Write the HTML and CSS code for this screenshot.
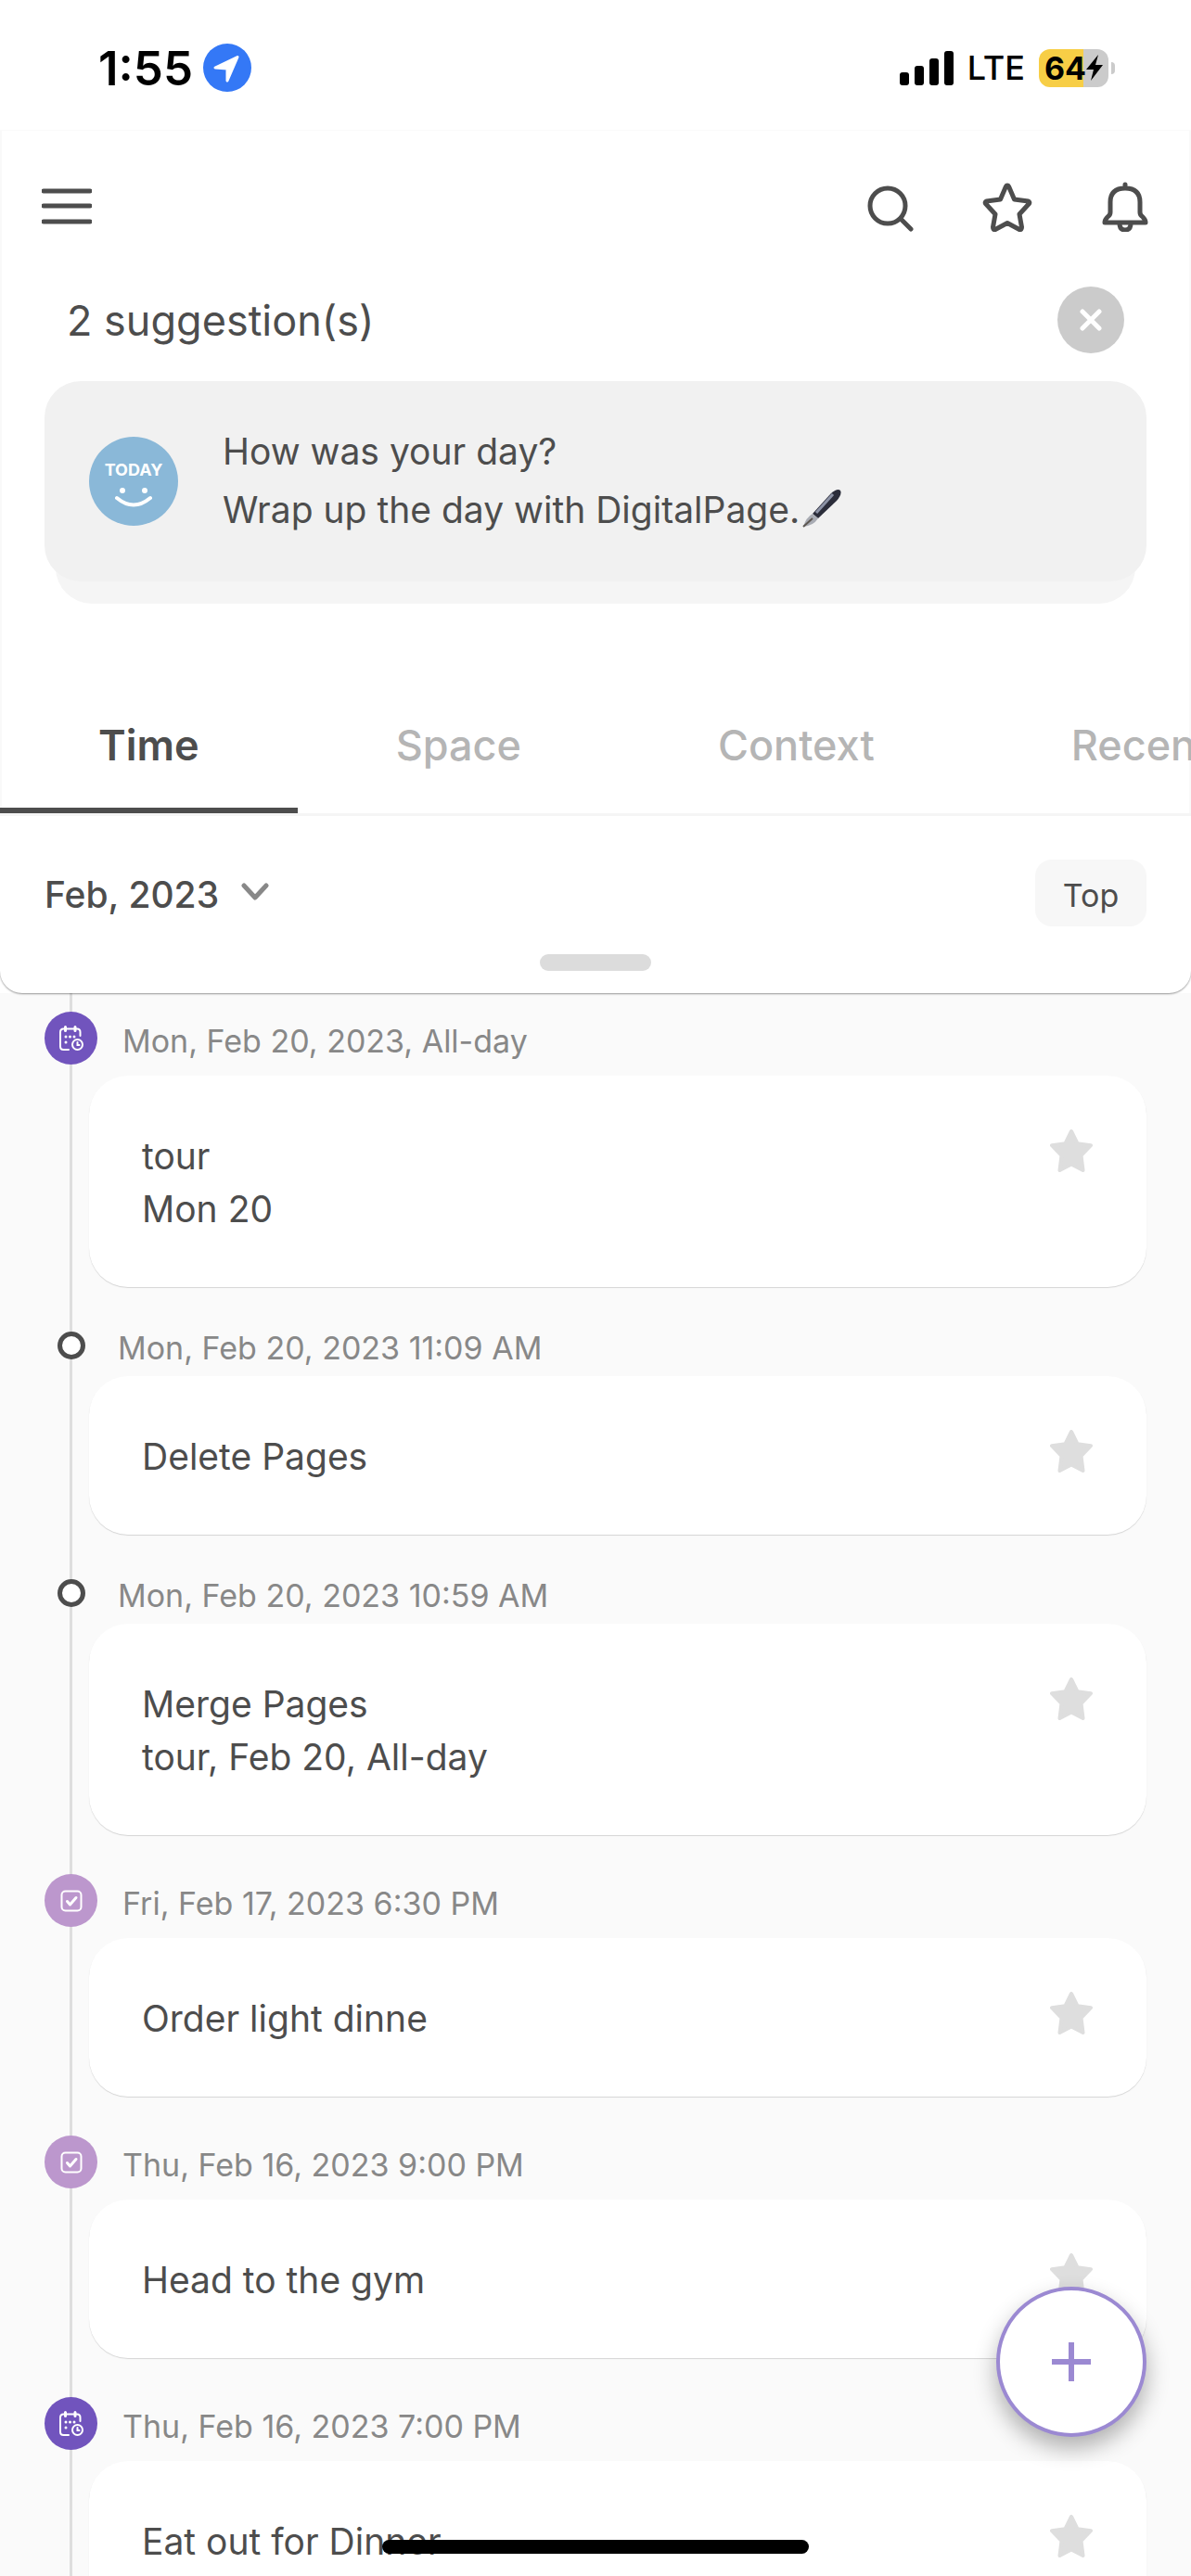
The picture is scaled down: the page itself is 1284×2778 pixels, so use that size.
FILE: index.html
```html
<!DOCTYPE html>
<html lang="en">

<head>
    <meta charset="utf-8">
    <meta name="viewport" content="width=device-width, initial-scale=1">
    <title>DigitalPage</title>
    <link rel="stylesheet" href="styles.css">
</head>

<body>
    <!-- shared icon shapes -->
    <svg class="sprite" aria-hidden="true">
        <symbol id="star" viewBox="0 0 46 46">
            <path d="M23 2 L29.500 15.200 L44 17.200 L33.500 28 L35.500 44 L23 37.500 L10.500 44 L12.500 28 L2 17.200 L16.500 15.200 Z" fill="currentColor" stroke="currentColor" stroke-width="4" stroke-linejoin="round" />
        </symbol>
        <symbol id="calendar" viewBox="0 0 30 30">
            <g fill="none" stroke="currentColor" stroke-width="2" stroke-linecap="round">
                <path d="M12 27 H6.500 Q3 27 3 23.500 V8 Q3 4.500 6.500 4.500 H21 Q24.500 4.500 24.500 8 V12" />
                <path d="M8.500 2.500 V6.500 M19 2.500 V6.500" stroke-width="3" />
                <circle cx="21.500" cy="21.500" r="5.500" />
                <path d="M21.500 19 V22 H23.500" />
            </g>
            <g fill="currentColor">
                <circle cx="9" cy="13" r="1.500" />
                <circle cx="13.500" cy="13" r="1.500" />
                <circle cx="18" cy="13" r="1.500" />
                <circle cx="9" cy="19" r="1.500" />
            </g>
        </symbol>
        <symbol id="check" viewBox="0 0 30 30">
            <g fill="none" stroke="currentColor" stroke-width="2" stroke-linecap="round" stroke-linejoin="round">
                <rect x="4.500" y="4.500" width="21" height="21" rx="4" />
                <path d="M10.500 15.500 L13.500 19 L20 11.500" stroke-width="3" />
            </g>
        </symbol>
    </svg>

    <div class="status-bar">
        <div class="status-left">
            <span class="clock">1:55</span>
            <svg class="location" viewBox="0 0 52 52">
                <circle cx="26" cy="26" r="26" fill="#3478f6" />
                <path d="M13 26 L37 14.500 L26 40 V27 Z" fill="#fff" stroke="#fff" stroke-width="3" stroke-linejoin="round" />
            </svg>
        </div>
        <div class="status-right">
            <svg class="signal" viewBox="0 0 58 38">
                <rect x="0" y="24" width="10" height="14" rx="3" />
                <rect x="16" y="17" width="10" height="21" rx="3" />
                <rect x="32" y="9" width="10" height="29" rx="3" />
                <rect x="48" y="1" width="10" height="37" rx="3" />
            </svg>
            <span class="network">LTE</span>
            <div class="battery">
                <span class="battery-level">64</span>
                <svg class="bolt" viewBox="0 0 18 28">
                    <path d="M13 0 L0 16 H8 L5 28 L18 11 H10 Z" />
                </svg>
            </div>
        </div>
    </div>

    <header class="panel">
        <div class="panel-top">
            <nav class="toolbar">
                <button class="icon-button menu-button" aria-label="Menu">
                    <svg viewBox="0 0 54 54">
                        <path d="M2 10 H52 M2 26 H52 M2 43 H52" />
                    </svg>
                </button>
                <button class="icon-button" aria-label="Search">
                    <svg viewBox="0 0 54 54">
                        <circle cx="24" cy="26" r="19" />
                        <path d="M38 40 L49 51" />
                    </svg>
                </button>
                <button class="icon-button" aria-label="Favorites">
                    <svg viewBox="0 0 54 54">
                        <path d="M27 4 Q28 4 28.500 5 L34.500 19 L49.500 21 Q51.500 22 50.500 23.500 L40 35 L42.500 49 Q42.500 52 40 51.500 L27 44.500 L14 51.500 Q11.500 52 11.500 49 L14 35 L3.500 23.500 Q2.500 22 4.500 21 L19.500 19 L25.500 5 Q26 4 27 4 Z" />
                    </svg>
                </button>
                <button class="icon-button" aria-label="Notifications">
                    <svg viewBox="0 0 54 54">
                        <path d="M28 3 V7 M12 22 Q12 7 28 7 Q44 7 44 22 V33 Q44 36 47 38 Q50 41 50 44 H6 Q6 41 9 38 Q12 36 12 33 Z" />
                        <path d="M22 45 Q22 52 28 52 Q34 52 34 45" />
                    </svg>
                </button>
            </nav>

            <section class="suggestions">
                <div class="suggestions-head">
                    <h2>2 suggestion(s)</h2>
                    <button class="close-button" aria-label="Close">
                        <svg viewBox="0 0 24 24">
                            <path d="M3 3 L21 21 M21 3 L3 21" />
                        </svg>
                    </button>
                </div>
                <div class="suggestion-stack">
                    <div class="suggestion-card">
                        <div class="avatar">
                            <span>TODAY</span>
                            <svg viewBox="0 0 40 22">
                                <circle cx="8" cy="3" r="3" fill="#fff" />
                                <circle cx="32" cy="3" r="3" fill="#fff" />
                                <path d="M2 11 Q20 26 38 11" fill="none" stroke="#fff" stroke-width="4" stroke-linecap="round" />
                            </svg>
                        </div>
                        <p>How was your day?<br>Wrap up the day with DigitalPage.<svg class="pen" viewBox="0 0 42 42">
                                <path d="M11 27 L31 5 Q38 -1 41 2 Q43 6 37 13 L17 32 Z" fill="#2b2d3a" />
                                <path d="M15 26 L33 6" stroke="#8d93a6" stroke-width="3" fill="none" />
                                <path d="M11 27 L17 32 Q12 40 1 41 Q4 31 11 27 Z" fill="#a9acb4" />
                                <path d="M1 41 L11 32" stroke="#5e5852" stroke-width="2" />
                            </svg></p>
                    </div>
                </div>
            </section>

            <div class="tabs">
                <button class="tab active">Time</button>
                <button class="tab">Space</button>
                <button class="tab">Context</button>
                <button class="tab">Recent</button>
            </div>
        </div>

        <div class="filter-bar">
            <button class="month-button">Feb, 2023
                <svg viewBox="0 0 30 20">
                    <path d="M3 3 L15 16 L27 3" />
                </svg>
            </button>
            <button class="top-button">Top</button>
        </div>
        <div class="grabber"></div>
    </header>

    <main class="timeline">
        <article class="entry">
            <div class="entry-head">
                <span class="marker event"><svg><use href="#calendar" /></svg></span>
                <time>Mon, Feb 20, 2023, All-day</time>
            </div>
            <div class="card">
                <p>tour<br>Mon 20</p>
                <button class="star-button" aria-label="Favorite"><svg><use href="#star" /></svg></button>
            </div>
        </article>
        <article class="entry">
            <div class="entry-head">
                <span class="marker"></span>
                <time>Mon, Feb 20, 2023 11:09 AM</time>
            </div>
            <div class="card">
                <p>Delete Pages</p>
                <button class="star-button" aria-label="Favorite"><svg><use href="#star" /></svg></button>
            </div>
        </article>
        <article class="entry">
            <div class="entry-head">
                <span class="marker"></span>
                <time>Mon, Feb 20, 2023 10:59 AM</time>
            </div>
            <div class="card">
                <p>Merge Pages<br>tour, Feb 20, All-day</p>
                <button class="star-button" aria-label="Favorite"><svg><use href="#star" /></svg></button>
            </div>
        </article>
        <article class="entry">
            <div class="entry-head">
                <span class="marker task"><svg><use href="#check" /></svg></span>
                <time>Fri, Feb 17, 2023 6:30 PM</time>
            </div>
            <div class="card">
                <p>Order light dinne</p>
                <button class="star-button" aria-label="Favorite"><svg><use href="#star" /></svg></button>
            </div>
        </article>
        <article class="entry">
            <div class="entry-head">
                <span class="marker task"><svg><use href="#check" /></svg></span>
                <time>Thu, Feb 16, 2023 9:00 PM</time>
            </div>
            <div class="card">
                <p>Head to the gym</p>
                <button class="star-button" aria-label="Favorite"><svg><use href="#star" /></svg></button>
            </div>
        </article>
        <article class="entry">
            <div class="entry-head">
                <span class="marker event"><svg><use href="#calendar" /></svg></span>
                <time>Thu, Feb 16, 2023 7:00 PM</time>
            </div>
            <div class="card">
                <p>Eat out for Dinner</p>
                <button class="star-button" aria-label="Favorite"><svg><use href="#star" /></svg></button>
            </div>
        </article>
    </main>

    <button class="add-button" aria-label="Add">
        <svg viewBox="0 0 42 42">
            <path d="M21 0 V42 M0 21 H42" />
        </svg>
    </button>
    <div class="home-indicator"></div>
</body>

</html>
```

FILE: styles.css
```css
* {
    box-sizing: border-box;
}

body {
    margin: 0;
    height: 100vh;
    overflow: hidden;
    background-color: #fff;
    color: #4d4d4d;
    font-family: Inter, "Liberation Sans", sans-serif;
    font-size: 39px;
}

button {
    border: none;
    padding: 0;
    background: none;
    color: inherit;
    font-family: inherit;
    cursor: pointer;
}

svg {
    display: block;
}

h2,
p {
    margin: 0;
    font-weight: 400;
}

.sprite {
    display: none;
}

/* status bar */
.status-bar {
    display: flex;
    justify-content: space-between;
    align-items: center;
    height: 141px;
    padding: 5px 89px 0 106px;
    color: #000;
}

.status-left,
.status-right {
    display: flex;
    align-items: center;
}

.status-left {
    gap: 11px;
}

.status-right {
    gap: 15px;
}

.clock {
    font-size: 51px;
    font-weight: 600;
}

.location {
    width: 52px;
    height: 52px;
}

.signal {
    width: 58px;
    height: 38px;
}

.network {
    font-size: 36px;
    font-weight: 500;
}

.battery {
    position: relative;
    display: flex;
    align-items: center;
    justify-content: center;
    width: 75px;
    height: 41px;
    border-radius: 12px;
    background: linear-gradient(to right, #f7ce46 64%, #cbcbcb 64%);
}

.battery::after {
    content: "";
    position: absolute;
    right: -7px;
    width: 4px;
    height: 13px;
    border-radius: 0 4px 4px 0;
    background-color: #cbcbcb;
}

.battery-level {
    font-size: 34px;
    font-weight: 700;
}

.bolt {
    width: 18px;
    height: 28px;
}

/* top panel */
.panel {
    position: relative;
    z-index: 1;
    padding-bottom: 24px;
    border-radius: 0 0 24px 24px;
    background-color: #fff;
    box-shadow: 0 1px 2px rgba(0, 0, 0, 0.4);
}

.panel-top {
    box-shadow: inset 2px 0 #f9f9f9, inset -2px 0 #f9f9f9;
}

.toolbar {
    display: flex;
    align-items: center;
    gap: 72px;
    height: 168px;
    padding: 0 45px 4px;
}

.icon-button svg {
    width: 54px;
    height: 54px;
    fill: none;
    stroke: #4d4d4d;
    stroke-width: 5;
    stroke-linecap: round;
    stroke-linejoin: round;
}

.menu-button {
    margin-right: auto;
}

.suggestions {
    padding: 0 48px;
}

.suggestions-head {
    display: flex;
    justify-content: space-between;
    align-items: center;
    height: 72px;
    margin-bottom: 30px;
    padding: 0 24px;
}

.suggestions-head h2 {
    font-size: 45px;
}

.close-button {
    display: flex;
    align-items: center;
    justify-content: center;
    width: 72px;
    height: 72px;
    border-radius: 50%;
    background-color: #cbcbcb;
}

.close-button svg {
    width: 24px;
    height: 24px;
    stroke: #fff;
    stroke-width: 5;
    stroke-linecap: round;
}

/* the second card peeks out below the first */
.suggestion-stack {
    position: relative;
    padding-bottom: 24px;
}

.suggestion-stack::before {
    content: "";
    position: absolute;
    left: 12px;
    right: 12px;
    bottom: 0;
    height: 100px;
    border-radius: 39px;
    background-color: #f5f5f5;
}

.suggestion-card {
    position: relative;
    display: flex;
    align-items: center;
    gap: 48px;
    height: 216px;
    padding: 0 48px;
    border-radius: 39px;
    background-color: #f1f1f1;
}

.suggestion-card p {
    padding-bottom: 3px;
    line-height: 63px;
}

.avatar {
    display: flex;
    flex-direction: column;
    align-items: center;
    gap: 9px;
    width: 96px;
    height: 96px;
    padding-top: 26px;
    border-radius: 50%;
    background-color: #8ab8d8;
    color: #fff;
    font-size: 18px;
    font-weight: 700;
    line-height: 20px;
}

.avatar svg {
    width: 40px;
    height: 22px;
}

.pen {
    display: inline-block;
    width: 42px;
    height: 42px;
    margin-left: 3px;
    vertical-align: -5px;
}

.tabs {
    display: flex;
    height: 229px;
    padding-top: 76px;
    border-bottom: 3px solid #f5f5f5;
    overflow: hidden;
}

.tab {
    flex: none;
    padding: 3px 106px 0;
    color: #b5b5b5;
    font-size: 45px;
    font-weight: 500;
}

.tab.active {
    border-bottom: 6px solid #4d4d4d;
    padding-top: 9px;
    color: #4d4d4d;
    font-weight: 600;
}

.filter-bar {
    display: flex;
    justify-content: space-between;
    align-items: center;
    height: 72px;
    margin: 47px 48px 30px;
}

.month-button {
    display: flex;
    align-items: center;
    gap: 24px;
    padding-top: 3px;
    font-size: 39px;
    font-weight: 500;
}

.month-button svg {
    width: 30px;
    height: 20px;
    margin-bottom: 6px;
    fill: none;
    stroke: #888;
    stroke-width: 5;
    stroke-linecap: round;
    stroke-linejoin: round;
}

.top-button {
    width: 120px;
    height: 72px;
    padding-top: 4px;
    border-radius: 18px;
    background-color: #f7f7f7;
    font-size: 34px;
}

.grabber {
    width: 120px;
    height: 18px;
    margin: 0 auto;
    border-radius: 9px;
    background-color: #dcdcdc;
}

/* timeline */
.timeline {
    padding: 20px 48px 0;
    background: linear-gradient(#dedede, #dedede) 75px 0 / 3px 100% no-repeat #fafafa;
}

.entry {
    margin-bottom: 42px;
}

.entry-head {
    display: flex;
    align-items: center;
    gap: 27px;
    margin-bottom: 12px;
}

.entry-head time {
    padding-top: 5px;
    color: #888;
    font-size: 34px;
    line-height: 37px;
}

.marker {
    width: 30px;
    height: 30px;
    margin: 0 8px 0 14px;
    border: 5px solid #4d4d4d;
    border-radius: 50%;
    background-color: #fff;
}

.marker.event,
.marker.task {
    display: flex;
    align-items: center;
    justify-content: center;
    width: 57px;
    height: 57px;
    margin: 0;
    border: none;
    color: #fff;
}

.marker.event {
    background-color: #7154bd;
}

.marker.task {
    background-color: #bc97cd;
}

.marker svg {
    width: 30px;
    height: 30px;
}

.card {
    display: flex;
    justify-content: space-between;
    align-items: flex-start;
    margin-left: 48px;
    padding: 58px 58px 56px 57px;
    border-radius: 42px;
    background-color: #fff;
    box-shadow: 0 1px 1px rgba(0, 0, 0, 0.15);
}

.card p {
    line-height: 57px;
}

.star-button {
    color: #dedede;
}

.star-button svg {
    width: 46px;
    height: 46px;
}

/* floating controls */
.add-button {
    position: fixed;
    z-index: 2;
    right: 48px;
    bottom: 150px;
    display: flex;
    align-items: center;
    justify-content: center;
    width: 162px;
    height: 162px;
    border: 4px solid #9b89d2;
    border-radius: 50%;
    background-color: #fff;
    box-shadow: 0 12px 24px rgba(0, 0, 0, 0.3);
}

.add-button svg {
    width: 42px;
    height: 42px;
    stroke: #9b89d2;
    stroke-width: 6;
}

.home-indicator {
    position: fixed;
    z-index: 3;
    left: 50%;
    bottom: 24px;
    width: 460px;
    height: 15px;
    margin-left: -230px;
    border-radius: 8px;
    background-color: #000;
}
```
